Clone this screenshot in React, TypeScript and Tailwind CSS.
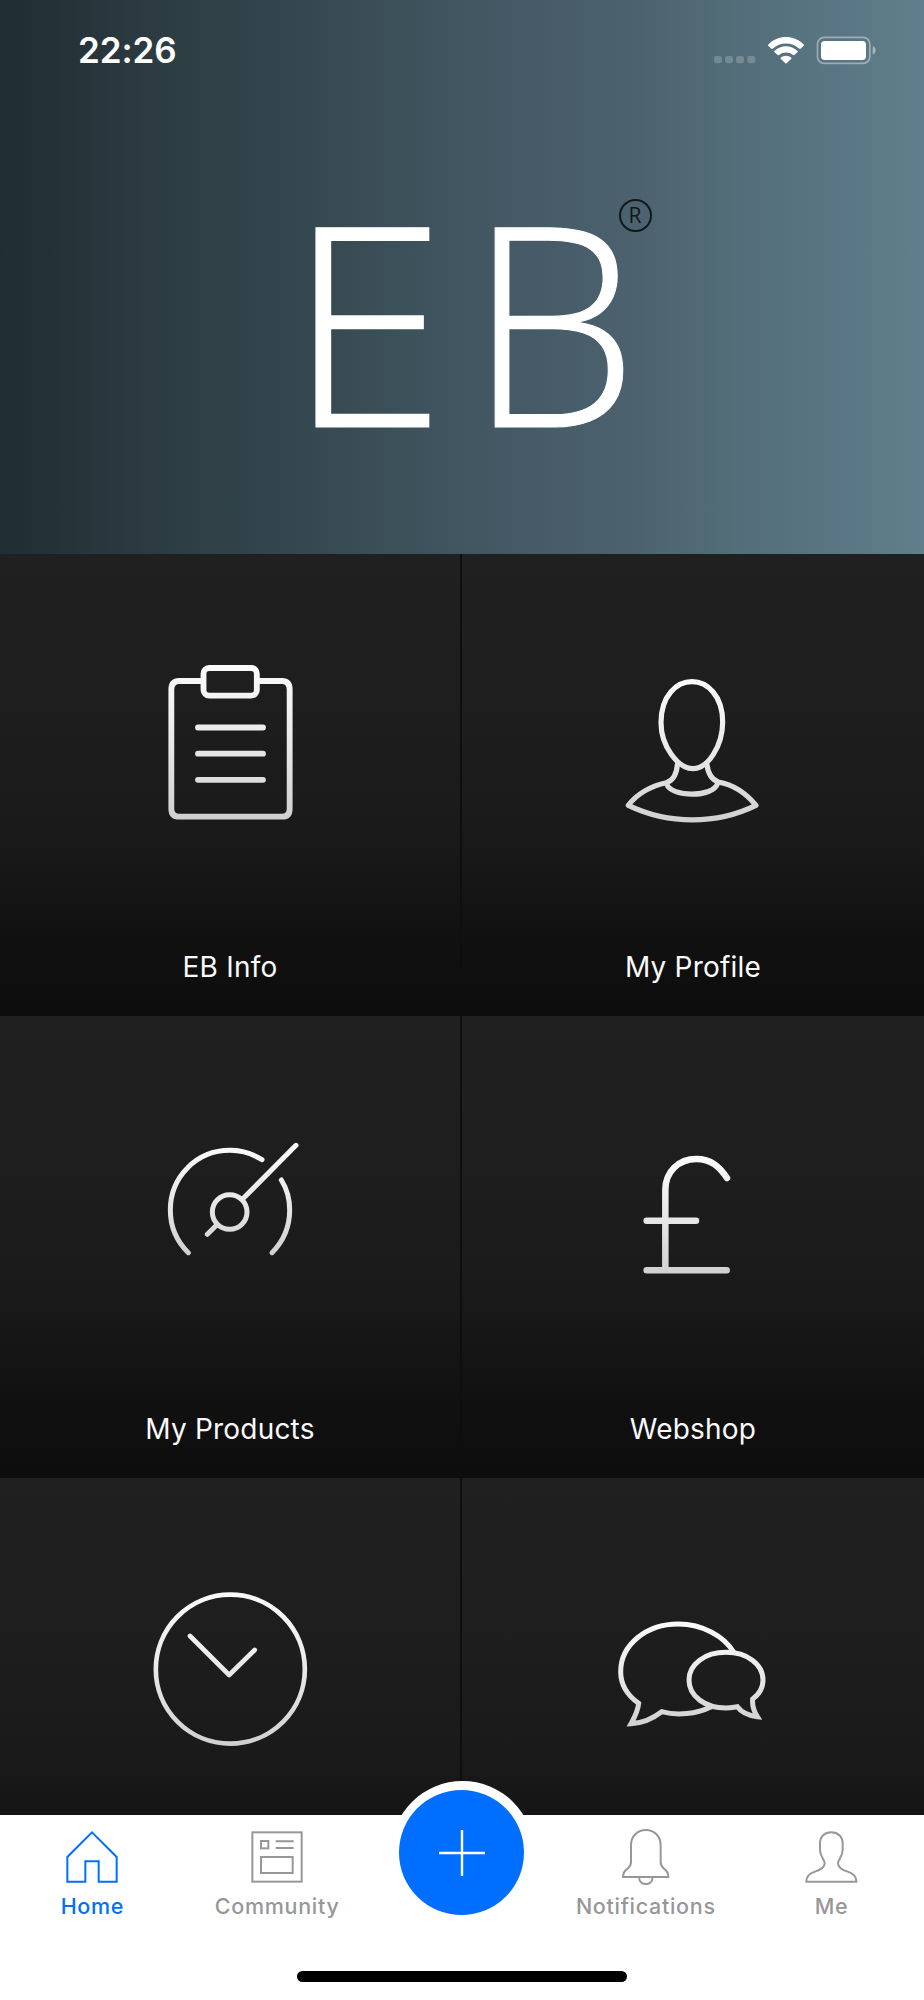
import type { ReactNode } from "react";

function TileIcon({ id, viewBox, y1, y2, width, children }: { id: string; viewBox: string; y1: number; y2: number; width: number; children: ReactNode }) {
  return (
    <svg viewBox={viewBox} className="h-[200px] w-[180px] shrink-0" fill="none" stroke={`url(#${id})`} strokeWidth={width} strokeLinecap="round" strokeLinejoin="round">
      <defs>
        <linearGradient id={id} gradientUnits="userSpaceOnUse" x1="0" y1={y1} x2="0" y2={y2}>
          <stop offset="0" stopColor="#fbfbfb" />
          <stop offset="0.5" stopColor="#e9e9e9" />
          <stop offset="1" stopColor="#d0d0d0" />
        </linearGradient>
      </defs>
      {children}
    </svg>
  );
}

const clipboard = (
  <TileIcon id="g-info" viewBox="0 0 540 600" y1={75} y2={540} width={17.5}>
    <path d="M184 123H118Q94 123 94 149V506Q94 530 118 530H426Q449 530 449 506V149Q449 123 426 123H357" strokeLinecap="butt" />
    <rect x="190.500" y="84" width="160" height="83" rx="17" />
    <path d="M174 262.500H369M174 341H369M174 419.500H369" />
  </TileIcon>
);

const profile = (
  <TileIcon id="g-profile" viewBox="9 -60 540 600" y1={57} y2={488} width={15.5}>
    <path d="M276 65C322 65 368 107 368 186C368 260 322 326 279 326C233 326 183 257 183 188C183 107 230 65 276 65Z" />
    <path d="M232 314C230 344 218 362 199 368C154 377 110 402 85 436C205 494 350 494 468 436C440 402 400 374 355 366C333 358 324 340 321 314" />
    <path d="M200 372C213 412 340 414 353 370" />
  </TileIcon>
);

const gauge = (
  <TileIcon id="g-products" viewBox="0 -54 540 600" y1={70} y2={405} width={15}>
    <path d="M145 398C107 361 91 318 91 270C91 172 168 91 270 91C305 91 337 101 366 119" />
    <path d="M424 180C441 207 449 238 449 270C449 318 432 362 396 398" />
    <circle cx="269" cy="276" r="52" />
    <path d="M307 238L468 76M231 314L202 343" />
  </TileIcon>
);

const pound = (
  <TileIcon id="g-shop" viewBox="-21 -84 540 600" y1={77} y2={431} width={19.5}>
    <path d="M166 420V180C166 124 207 87 259 87C304 87 329 111 351 144M110 272.500H258M110 420.500H350" />
  </TileIcon>
);

const clock = (
  <TileIcon id="g-clock" viewBox="0 -18 540 600" y1={65} y2={528} width={14}>
    <circle cx="271" cy="297.500" r="223.500" />
    <path d="M150 198L267.500 315L344 240" />
  </TileIcon>
);

const chat = (
  <TileIcon id="g-chat" viewBox="9 -108 540 600" y1={64} y2={380} width={15}>
    <path strokeLinejoin="miter" strokeLinecap="butt" d="M401 157C374 109 307 72 235 72C139 72 62 134 62 215C62 254 84 287 116 310C114 332 104 352 93 371C128 369 158 356 185 335C232 348 289 342 334 320" />
    <path strokeLinejoin="miter" d="M378 157C441 157 489 192 489 240C489 263 477 283 458 297C456 317 462 334 472 350C443 346 425 338 412 320C400 322 390 324 378 324C315 324 267 289 267 240C267 192 315 157 378 157Z" />
  </TileIcon>
);

const tiles = [
  { id: "info", label: "EB Info", icon: clipboard },
  { id: "profile", label: "My Profile", icon: profile },
  { id: "products", label: "My Products", icon: gauge },
  { id: "shop", label: "Webshop", icon: pound },
  { id: "clock", icon: clock },
  { id: "chat", icon: chat },
];

function TabIcon({ viewBox, width = 5, children }: { viewBox: string; width?: number; children: ReactNode }) {
  return (
    <svg viewBox={viewBox} className="h-[60px] w-[60px] shrink-0" fill="none" stroke="currentColor" strokeWidth={width}>
      {children}
    </svg>
  );
}

function Tab({ label, active, children }: { label: string; active?: boolean; children: ReactNode }) {
  return (
    <button className={`flex flex-col items-center pt-[13px] ${active ? "text-[#006fff]" : "text-[#979797]"}`}>
      {children}
      <span className="mt-[4px] text-[21.500px] leading-7 font-medium tracking-[0.700px]">{label}</span>
    </button>
  );
}

function StatusIcons() {
  return (
    <svg viewBox="0 0 660 180" className="h-[60px] w-[220px]" fill="none">
      <g fill="#fff" fillOpacity="0.2">
        <rect x="102" y="108" width="24" height="22" rx="7" />
        <rect x="135" y="108" width="24" height="22" rx="7" />
        <rect x="168" y="108" width="24" height="22" rx="7" />
        <rect x="202" y="108" width="24" height="22" rx="7" />
      </g>
      <g fill="#fff">
        <path d="M264 74C294 43 342 43 372 74Q373 76 371 77L362 86Q360 87 358 86C336 65 300 65 278 86Q276 87 274 86L265 77Q263 76 264 74Z" />
        <path d="M283 93C303 74 333 74 353 93Q354 95 353 96L343 105Q341 106 339 105C327 95 309 95 297 105Q295 106 293 105L283 96Q282 95 283 93Z" />
        <path d="M302 113C311 105 325 105 334 113Q335 115 334 116L320 130Q318 131 316 130L302 116Q301 115 302 113Z" />
      </g>
      <rect x="412.500" y="52" width="157" height="78" rx="20" stroke="#fff" strokeOpacity="0.4" strokeWidth="5" />
      <rect x="423" y="63" width="135" height="57" rx="11" fill="#fff" />
      <path d="M578 77Q587 82 587 91Q587 100 578 105Z" fill="#fff" fillOpacity="0.45" />
    </svg>
  );
}

export default function App() {
  return (
    <div className="flex h-[2000px] w-[924px] flex-col overflow-hidden bg-[#0e0e0e] font-['Inter',sans-serif]">
      <header className="h-[554px] shrink-0 bg-[linear-gradient(90deg,#202d32_0%,#2b3b41_16%,#35484f_33%,#415661_50%,#4a606c_66%,#536e79_80%,#5a7684_91%,#607e8b_100%)]">
        <div className="flex items-start justify-between pt-5 pr-6 pl-[78px]">
          <time className="mt-[8px] text-[35px] leading-[44px] font-semibold tracking-[-0.100px] text-white">22:26</time>
          <StatusIcons />
        </div>
        <h1 className="relative mx-auto mt-[49px] h-[380px] w-[340px] font-['Open_Sans',sans-serif] font-light text-white">
          <span className="flex text-[279px] leading-[380px] [-webkit-text-stroke:1.200px_white]">
            <span className="-ml-[5px] w-[181px] shrink-0 origin-left scale-x-[1.035]">E</span>
            <span className="origin-left scale-x-[0.970]">B</span>
          </span>
          <span className="absolute top-[70px] left-[326.500px] flex size-[33px] items-center justify-center rounded-full border-2 border-[#10181b] text-[21px] leading-none font-normal text-[#10181b]">R</span>
        </h1>
      </header>

      <main className="grid h-[1261px] shrink-0 auto-rows-[462px] grid-cols-[460px_462px] gap-x-[2px] overflow-hidden">
        {tiles.map((t) => (
          <section key={t.id} className="flex flex-col items-center bg-[linear-gradient(180deg,#202020_0%,#1e1e1e_30%,#1a1a1a_60%,#111111_82%,#0d0d0d_100%)] pt-[86px]">
            {t.icon}
            {t.label && <h2 className="mt-[109px] text-[28px] leading-9 tracking-[0.200px] text-[#fafafa]">{t.label}</h2>}
          </section>
        ))}
      </main>

      <nav className="relative h-[185px] shrink-0 bg-white">
        <div className="absolute -top-[34px] left-[391px] size-[143px] rounded-full bg-white" />
        <div className="relative grid grid-cols-5">
          <Tab label="Home" active>
            <TabIcon viewBox="187 174 180 180" width={6}>
              <path d="M277 187L351 261V335H297V274H257V335H203V261Z" />
            </TabIcon>
          </Tab>
          <Tab label="Community">
            <TabIcon viewBox="743 174 180 180" width={6}>
              <rect x="759" y="187" width="148" height="148" />
              <rect x="785" y="213" width="22" height="22" />
              <rect x="785" y="261" width="95" height="48" />
              <path d="M829 214H883M829 234H883" />
            </TabIcon>
          </Tab>
          <div className="flex justify-center">
            <button aria-label="Add" className="-mt-[25px] flex size-[125px] items-center justify-center rounded-full bg-[#006fff]">
              <svg viewBox="0 0 46 46" className="size-[46px]" stroke="#fff" strokeWidth="2.400">
                <path d="M23 0V46M0 23H46" />
              </svg>
            </button>
          </div>
          <div className="-ml-[2px] grid">
            <Tab label="Notifications">
              <TabIcon viewBox="486 174 180 180" width={6}>
                <path d="M507 321H643C643 310 638 302 630 296Q620 288 620 277V226C620 199 601 180 575.500 180C550 180 531 199 531 226V277Q531 288 521 296C512 302 507 310 507 321Z" />
                <path d="M555 322C556 349 595 349 596 322" />
              </TabIcon>
            </Tab>
          </div>
          <Tab label="Me">
            <TabIcon viewBox="1043 174 180 180" width={6}>
              <path d="M1056 335H1206C1206 319 1196 310 1180 305C1160 299 1151 293 1151 280C1151 268 1165 260 1165 240V220C1165 200 1150 187 1131 187C1111 187 1097 200 1097 220V240C1097 260 1111 268 1111 280C1111 293 1101 299 1082 305C1066 310 1056 319 1056 335Z" />
            </TabIcon>
          </Tab>
        </div>
        <div className="absolute bottom-[18px] left-1/2 h-[11px] w-[330px] -translate-x-1/2 rounded-full bg-black" />
      </nav>
    </div>
  );
}
